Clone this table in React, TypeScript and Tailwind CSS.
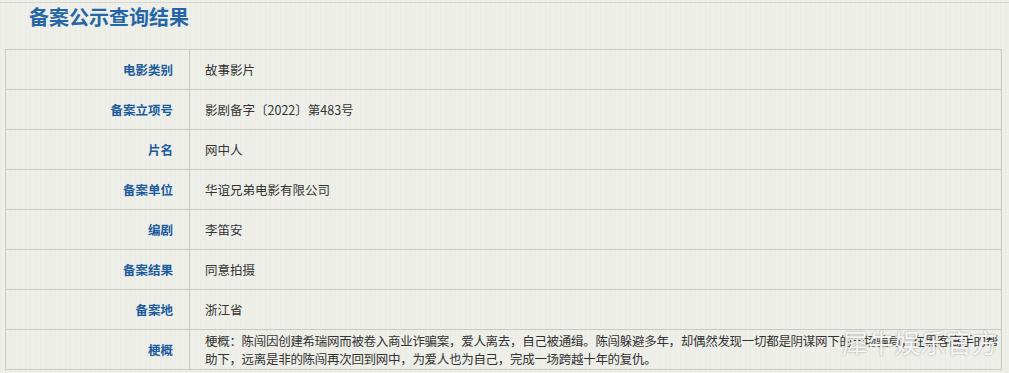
const rows: { label: string; value: string }[] = [
  { label: '电影类别', value: '故事影片' },
  { label: '备案立项号', value: '影剧备字〔2022〕第483号' },
  { label: '片名', value: '网中人' },
  { label: '备案单位', value: '华谊兄弟电影有限公司' },
  { label: '编剧', value: '李笛安' },
  { label: '备案结果', value: '同意拍摄' },
  { label: '备案地', value: '浙江省' },
];

const App = () => {
  return (
    <div className="relative w-[1009px] h-[373px] overflow-hidden bg-[#eeefe9] bg-[repeating-linear-gradient(90deg,rgba(0,0,0,0.015)_0px,rgba(0,0,0,0.015)_1px,transparent_1px,transparent_5px)] font-['Noto_Sans_CJK_SC',sans-serif]">
      <div className="h-[2px]"></div>
      <div className="border-t border-[#d6d6d2]"></div>

      {/* Title */}
      <h1 className="pl-[29px] pt-0 h-[46px] text-[20px] leading-[28px] font-bold text-[#2566a6]">
        备案公示查询结果
      </h1>

      {/* Result table */}
      <table className="ml-[5px] w-[997px] table-fixed border-collapse text-[12.5px]">
        <colgroup>
          <col className="w-[184px]" />
          <col />
        </colgroup>
        <tbody>
          {rows.map((r) => (
            <tr key={r.label} className="h-[40px]">
              <td className="border border-[#c8c8c4] pr-[16px] text-right font-bold text-[#1d5c9c] leading-[16px]">
                {r.label}
              </td>
              <td className="border border-[#c8c8c4] pl-[15px] text-[#333333] leading-[16px]">
                {r.value}
              </td>
            </tr>
          ))}
          <tr className="h-[40px]">
            <td className="border border-[#c8c8c4] pr-[16px] text-right font-bold text-[#1d5c9c] leading-[16px]">
              梗概
            </td>
            <td className="border border-[#c8c8c4] pl-[15px] pr-0 text-[#333333] leading-[18px] tracking-[-0.3px] whitespace-nowrap">
              梗概：陈闯因创建希瑞网而被卷入商业诈骗案，爱人离去，自己被通缉。陈闯躲避多年，却偶然发现一切都是阴谋网下的一场骗局，在黑客高手的帮
              <br />
              助下，远离是非的陈闯再次回到网中，为爱人也为自己，完成一场跨越十年的复仇。
            </td>
          </tr>
        </tbody>
      </table>

      {/* Watermark */}
      <div className="absolute left-[842px] top-[325px] text-[26px] leading-[34px] text-white/90 [text-shadow:0_0_2px_rgba(80,80,80,0.6)] font-['Noto_Sans_CJK_SC',sans-serif]">
        犀牛娱乐官方
      </div>
    </div>
  );
};

export default App;
